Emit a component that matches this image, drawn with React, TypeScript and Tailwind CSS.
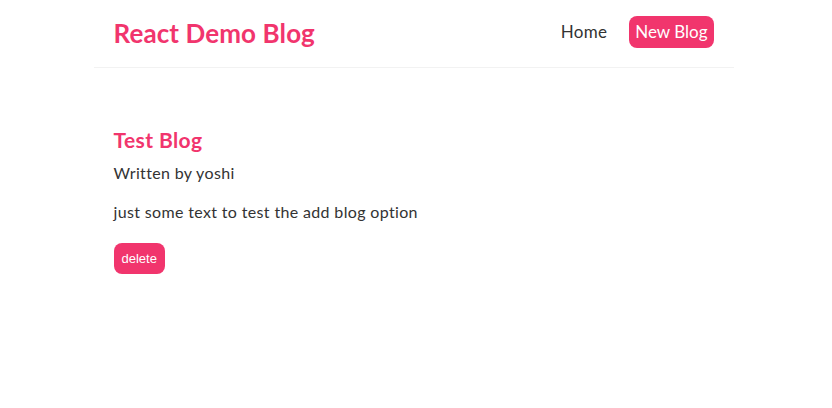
export default function App() {
  return (
    <div className="min-h-[408px] bg-white pr-[5px] font-['Lato',sans-serif] text-[#333]">
      <nav className="mx-auto flex h-[68px] max-w-[640px] items-center border-b border-[#f2f2f2] px-5">
        <h1 className="text-[26px] font-bold tracking-[0.1px] text-[#f1356d]">React Demo Blog</h1>
        <div className="ml-auto -mt-[3px] flex items-center">
          <a href="#" className="p-1.5 text-[17px] tracking-[0.3px] text-[#333]">Home</a>
          <a
            href="#"
            className="ml-[16px] rounded-lg bg-[#f1356d] px-1.5 py-1 text-[17px] leading-6 text-white"
          >
            New Blog
          </a>
        </div>
      </nav>

      <div className="mx-auto max-w-[640px] px-5 pt-[58px]">
        <h2 className="text-[21px] font-bold leading-7 tracking-[0.4px] text-[#f1356d]">Test Blog</h2>
        <p className="mt-[7px] text-[16px] leading-6 tracking-[0.35px]">Written by yoshi</p>
        <div className="mt-[15px] text-[16px] leading-6 tracking-[0.35px]">
          just some text to test the add blog option
        </div>
        <button className="mt-[19px] rounded-lg bg-[#f1356d] px-2 py-[7px] font-['Liberation_Sans',sans-serif] text-[13px] leading-[17px] text-white">
          delete
        </button>
      </div>
    </div>
  );
}
